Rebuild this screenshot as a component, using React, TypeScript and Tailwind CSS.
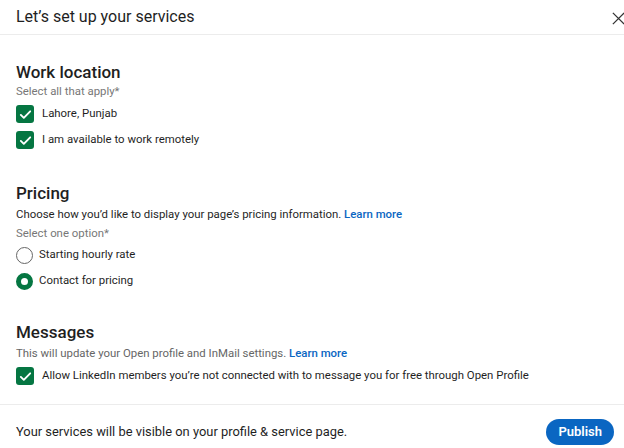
import React, { useState } from "react";

const CheckMark = () => (
  <svg viewBox="0 0 16 16" width="15" height="15" fill="none">
    <path
      d="M3 8.4l3.2 3.2L13 4.6"
      stroke="white"
      strokeWidth="2"
      strokeLinecap="round"
      strokeLinejoin="round"
    />
  </svg>
);

const CheckRow: React.FC<{ label: string; checked: boolean; onToggle: () => void }> = ({
  label,
  checked,
  onToggle,
}) => (
  <button type="button" onClick={onToggle} className="flex h-[26px] items-center gap-2 text-left">
    <span
      className={`flex h-[18px] w-[18px] shrink-0 items-center justify-center rounded-[3px] ${
        checked ? "bg-[#057642]" : "border border-[#666]"
      }`}
    >
      {checked && <CheckMark />}
    </span>
    <span className="text-[11.4px] text-[#1f1f1f]">{label}</span>
  </button>
);

const RadioRow: React.FC<{ label: string; selected: boolean; onSelect: () => void }> = ({
  label,
  selected,
  onSelect,
}) => (
  <button type="button" onClick={onSelect} className="flex h-[26px] items-center gap-[6px] text-left">
    <span
      className={`h-[17px] w-[17px] shrink-0 rounded-full ${
        selected ? "border-[5px] border-[#057642] bg-white" : "border border-[#666]"
      }`}
    />
    <span className="text-[11.4px] text-[#1f1f1f]">{label}</span>
  </button>
);

export default function App() {
  const [onsite, setOnsite] = useState(true);
  const [remote, setRemote] = useState(true);
  const [pricing, setPricing] = useState<"hourly" | "contact">("contact");
  const [openProfile, setOpenProfile] = useState(true);

  return (
    <div className="flex h-[448px] w-[624px] flex-col overflow-hidden bg-white font-['Roboto','Noto_Sans',sans-serif] text-[#1f1f1f]">
      <header className="flex h-[35px] shrink-0 items-center justify-between border-b border-[#ececec] pl-4">
        <h2 className="text-[16px] leading-5 text-[#1f1f1f]">Let’s set up your services</h2>
        <button type="button" className="mr-[-2px] mt-[2px] text-[#333]">
          <svg viewBox="0 0 16 16" width="15" height="15" fill="none">
            <path d="M2 2l12 12M14 2L2 14" stroke="currentColor" strokeWidth="1.4" />
          </svg>
        </button>
      </header>

      <main className="flex-1 px-4 pt-[26px]">
        <section>
          <h3 className="text-[17px] font-medium leading-[22px]">Work location</h3>
          <p className="text-[11.4px] leading-4 text-[#777]">Select all that apply*</p>
          <div className="mt-[2px] flex flex-col">
            <CheckRow label="Lahore, Punjab" checked={onsite} onToggle={() => setOnsite(!onsite)} />
            <CheckRow
              label="I am available to work remotely"
              checked={remote}
              onToggle={() => setRemote(!remote)}
            />
          </div>
        </section>

        <section className="mt-[29px]">
          <h3 className="text-[17px] font-medium leading-[22px]">Pricing</h3>
          <p className="mt-[2px] text-[11.4px] leading-4">
            Choose how you’d like to display your page’s pricing information.{" "}
            <a href="#" className="font-medium text-[#0a66c2]">
              Learn more
            </a>
          </p>
          <p className="mt-[3px] text-[11.4px] leading-4 text-[#777]">Select one option*</p>
          <div className="mt-[1px] flex flex-col">
            <RadioRow
              label="Starting hourly rate"
              selected={pricing === "hourly"}
              onSelect={() => setPricing("hourly")}
            />
            <RadioRow
              label="Contact for pricing"
              selected={pricing === "contact"}
              onSelect={() => setPricing("contact")}
            />
          </div>
        </section>

        <section className="mt-[27px]">
          <h3 className="text-[17px] font-medium leading-[22px]">Messages</h3>
          <p className="mt-[2px] text-[11.4px] leading-4 text-[#666]">
            This will update your Open profile and InMail settings.{" "}
            <a href="#" className="font-medium text-[#0a66c2]">
              Learn more
            </a>
          </p>
          <div className="mt-[2px]">
            <CheckRow
              label="Allow LinkedIn members you’re not connected with to message you for free through Open Profile"
              checked={openProfile}
              onToggle={() => setOpenProfile(!openProfile)}
            />
          </div>
        </section>
      </main>

      <footer className="flex h-[44px] shrink-0 items-center justify-between border-t border-[#ececec] pl-4 pr-[10px]">
        <p className="mt-[10px] text-[12.9px]">Your services will be visible on your profile &amp; service page.</p>
        <button
          type="button"
          className="mt-[10px] h-[26px] rounded-full bg-[#0a66c2] px-[12px] text-[13px] font-semibold text-white"
        >
          Publish
        </button>
      </footer>
    </div>
  );
}
